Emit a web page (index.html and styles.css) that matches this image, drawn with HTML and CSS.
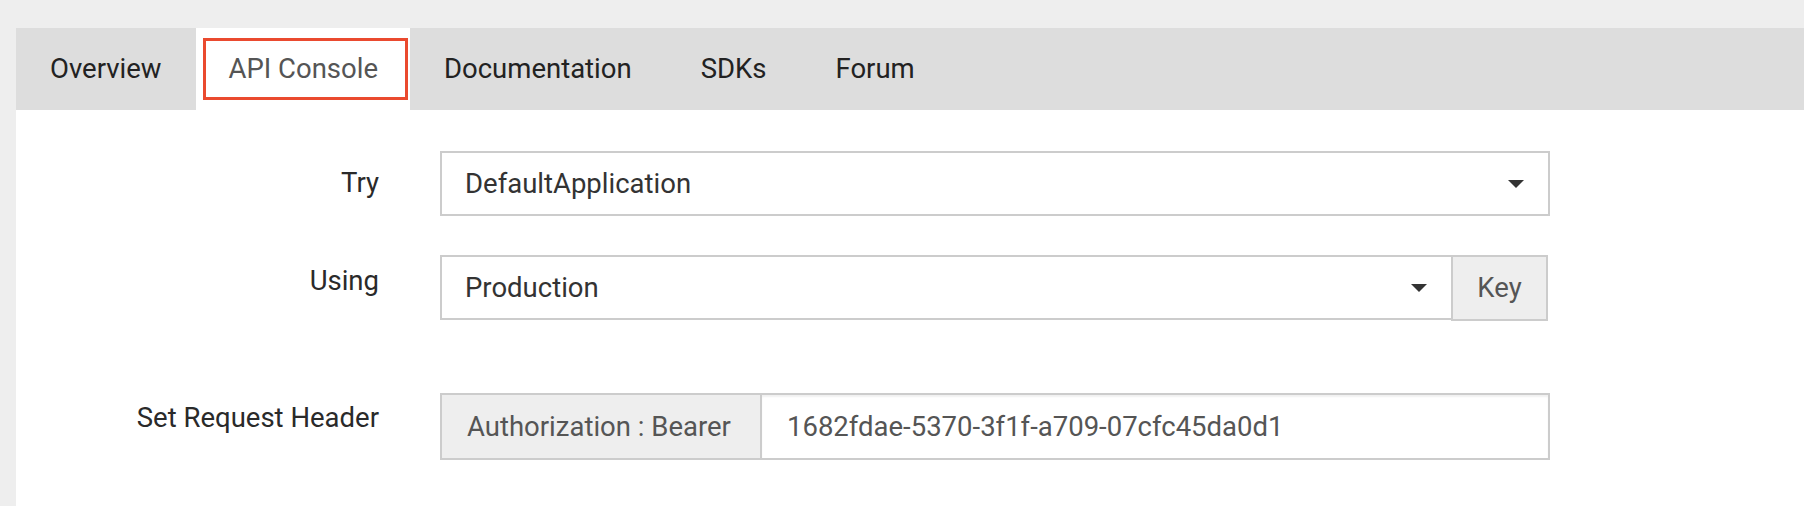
FILE: index.html
```html
<!DOCTYPE html>
<html lang="en">
<head>
<meta charset="utf-8">
<title>API Console</title>
<link rel="stylesheet" href="styles.css">
</head>
<body>
<div class="page">
  <div class="panel">
    <ul class="tabs">
      <li class="tab">Overview</li>
      <li class="tab tab-active"><span class="tab-focus">API Console</span></li>
      <li class="tab">Documentation</li>
      <li class="tab">SDKs</li>
      <li class="tab">Forum</li>
    </ul>
    <div class="form">
      <div class="field field-try">
        <label class="label">Try</label>
        <div class="select select-full">
          <span class="select-value">DefaultApplication</span>
          <span class="caret"></span>
        </div>
      </div>
      <div class="field field-using">
        <label class="label">Using</label>
        <div class="group">
          <div class="select select-key">
            <span class="select-value">Production</span>
            <span class="caret"></span>
          </div>
          <button class="key-btn" type="button">Key</button>
        </div>
      </div>
      <div class="field field-header">
        <label class="label">Set Request Header</label>
        <div class="group group-header">
          <span class="addon">Authorization : Bearer</span>
          <span class="token">1682fdae-5370-3f1f-a709-07cfc45da0d1</span>
        </div>
      </div>
    </div>
  </div>
</div>
</body>
</html>
```
FILE: styles.css
```css
html, body {
  margin: 0;
  padding: 0;
}

body {
  background: #eeeeee;
  font-family: Roboto, "Liberation Sans", Arial, sans-serif;
  font-size: 27.5px;
  color: #333333;
}

.page {
  box-sizing: border-box;
  height: 506px;
  padding: 28px 0 0 16px;
}

.panel {
  background: #ffffff;
  height: 100%;
}

/* Tabs */
.tabs {
  display: flex;
  margin: 0;
  padding: 0;
  list-style: none;
  background: #dddddd;
  height: 82px;
}

.tab {
  display: flex;
  align-items: center;
  padding: 0 35px 0 34px;
  color: #222222;
  line-height: 32px;
}

.tab-active {
  background: #ffffff;
  padding: 10px 2px 10px 7px;
}

.tab-focus {
  box-sizing: border-box;
  display: flex;
  align-items: center;
  height: 100%;
  border: 3px solid #ea4a2f;
  padding: 0 27px 0 22px;
  color: #555555;
}

/* Form */
.form {
  padding-top: 41px;
}

.field {
  display: flex;
  align-items: flex-start;
}

.field-using {
  margin-top: 39px;
}

.field-header {
  margin-top: 72px;
}

.label {
  box-sizing: border-box;
  width: 363px;
  margin-right: 61px;
  text-align: right;
  line-height: 32px;
  color: #2a2a2a;
  padding-top: 9px;
}

.field-try .label {
  padding-top: 16px;
}

.field-using .label {
  padding-top: 10px;
}

.select {
  box-sizing: border-box;
  display: flex;
  align-items: center;
  justify-content: space-between;
  height: 65px;
  border: 2px solid #cccccc;
  background: #ffffff;
  padding: 0 24px 0 23px;
  color: #333333;
}

.select-full {
  width: 1110px;
}

.select-value {
  line-height: 32px;
}

.caret {
  width: 0;
  height: 0;
  border-top: 8px solid #333333;
  border-left: 8px solid transparent;
  border-right: 8px solid transparent;
}

.group {
  display: flex;
  align-items: flex-start;
}

.select-key {
  width: 1013px;
}

.key-btn {
  box-sizing: border-box;
  width: 97px;
  height: 66px;
  margin-left: -2px;
  border: 2px solid #cccccc;
  background: #eeeeee;
  color: #555555;
  font: inherit;
  line-height: 32px;
  padding: 0;
}

.group-header {
  width: 1110px;
  height: 67px;
}

.addon {
  box-sizing: border-box;
  display: flex;
  align-items: center;
  height: 100%;
  width: 322px;
  padding: 0 0 0 25px;
  border: 2px solid #cccccc;
  background: #eeeeee;
  color: #555555;
  line-height: 32px;
}

.token {
  box-sizing: border-box;
  flex: 1;
  display: flex;
  align-items: center;
  height: 100%;
  margin-left: -2px;
  padding-left: 25px;
  border: 2px solid #cccccc;
  background: #ffffff;
  box-shadow: inset 0 2px 2px rgba(0, 0, 0, 0.06);
  color: #555555;
  line-height: 32px;
}
```
